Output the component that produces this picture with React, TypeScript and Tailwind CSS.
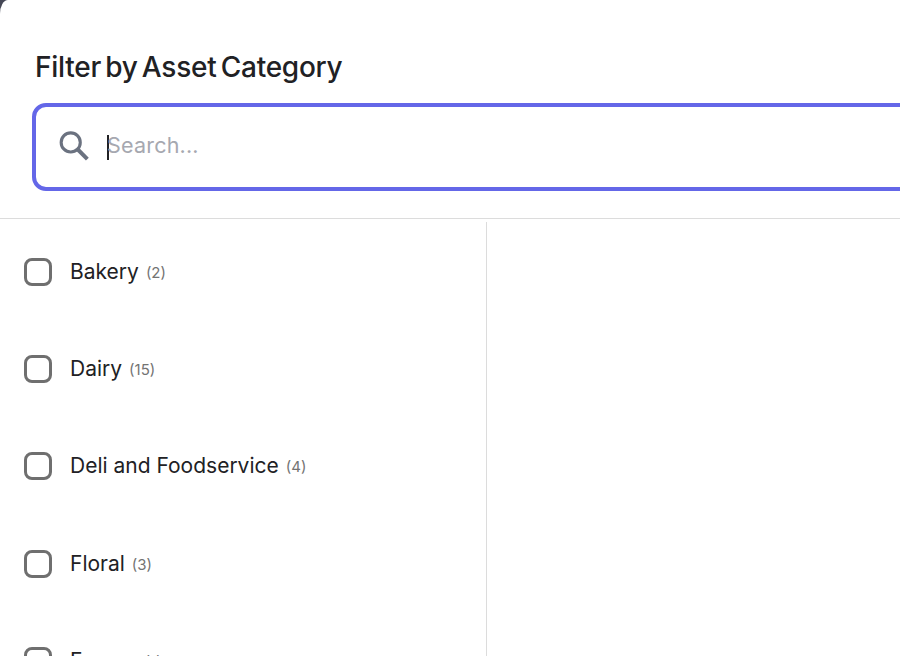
import React from "react";

const rows: [string, string][] = [
  ["Bakery", "(2)"],
  ["Dairy", "(15)"],
  ["Deli and Foodservice", "(4)"],
  ["Floral", "(3)"],
  ["Frozen", "(1)"],
];

export default function App() {
  return (
    <div className="w-[900px] h-[656px] overflow-hidden bg-[#454856] font-['Inter',sans-serif]">
      <div className="w-[1100px] h-[656px] bg-white rounded-tl-[8px_14px] flex flex-col">
        <div className="h-[219px] shrink-0 border-b border-[#dcdcdc] pt-[47px] pl-[32px] pr-[32px]">
          <h2 className="pl-[3px] h-[40px] text-[28px] leading-[40px] font-medium tracking-[-0.25px] [word-spacing:-3px] text-[#212124]">
            Filter by Asset Category
          </h2>
          <div className="mt-[16px] h-[88px] rounded-[14px] border-4 border-[#6467e8] flex items-center pl-[19px]">
            <svg width="37" height="37" viewBox="0 0 24 24" fill="none" stroke="#6b7280" strokeWidth="2" className="shrink-0 -mt-[3px]">
              <circle cx="10.2" cy="10" r="6.2" />
              <path d="M14.8 14.6 L21 20.8" strokeWidth="2.6" />
            </svg>
            <span className="w-[2px] h-[25px] bg-[#212124] ml-[15px] shrink-0" />
            <span className="text-[21.5px] leading-[26px] text-[#a6a8b0] -ml-[2px] -mt-[5px] tracking-[0.2px]">Search...</span>
          </div>
        </div>
        <div className="flex-1 pt-[3px] flex min-h-0">
          <div className="w-[487px] border-r border-[#dcdcdc] pt-[35.5px] pl-[24px] overflow-hidden">
            {rows.map(([name, count]) => (
              <div key={name} className="h-[28px] mb-[69.4px] flex items-center">
                <span className="w-[28px] h-[28px] rounded-[8px] border-[3px] border-[#6f6f6f] shrink-0" />
                <span className="ml-[18px] text-[21px] leading-[28px] text-[#212124]">{name}</span>
                <span className="ml-[7px] mt-[2px] text-[15px] leading-[28px] text-[#737373]">{count}</span>
              </div>
            ))}
          </div>
        </div>
      </div>
    </div>
  );
}
